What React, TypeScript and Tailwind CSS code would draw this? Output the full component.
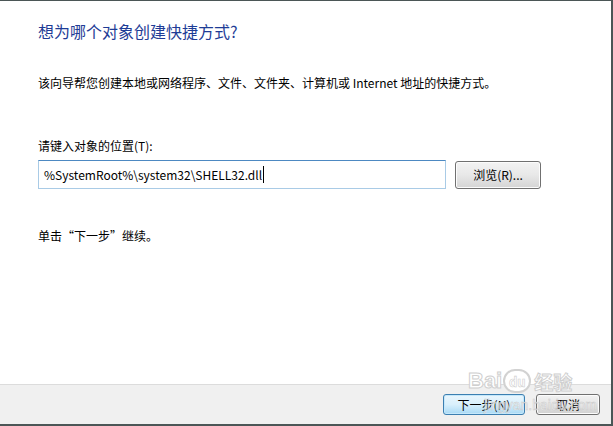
export default function App() {
  return (
    <div className="relative flex h-[426px] w-[613px] flex-col border-t border-r-2 border-b-2 border-[#4b5656] bg-white font-['Noto_Sans_CJK_SC',sans-serif] text-[12px] text-black">
      {/* Content */}
      <div className="flex-1 pl-[38px] pt-[20px]">
        <h1 className="text-[16px] leading-[20px] text-[#1e3c96]">想为哪个对象创建快捷方式?</h1>
        <p className="mt-[34px] leading-[16px]">
          该向导帮您创建本地或网络程序、文件、文件夹、计算机或 Internet 地址的快捷方式。
        </p>
        <div className="mt-[47px] leading-[16px]">请键入对象的位置(T):</div>
        <div className="mt-[6px] flex items-start">
          <div className="flex h-[29px] w-[408px] items-center border border-[#a9cbe6] border-t-[#4d89c2] pl-[5px] text-[12px] leading-none">
            <span>%SystemRoot%\system32\SHELL32.dll</span>
            <span className="ml-px h-[17px] w-px bg-black" />
          </div>
          <button className="ml-[9px] mt-px h-[28px] w-[86px] rounded-[3px] border border-[#707070] bg-gradient-to-b from-[#f3f3f3] via-[#e8e8e8] to-[#d4d4d4] text-[12px] leading-none shadow-[inset_0_0_0_1px_#fcfcfc]">
            浏览(R)...
          </button>
        </div>
        <p className="mt-[39px] leading-[16px]">单击“下一步”继续。</p>
      </div>

      {/* Footer */}
      <div className="flex h-[40px] items-start justify-end gap-[11px] border-t border-[#dcdcdc] bg-[#f0f0f0] pr-[11px] pt-[9px]">
        <button className="h-[21px] w-[82px] rounded-[3px] border border-[#3c7fb1] bg-gradient-to-b from-[#eaf6fd] via-[#d9f0fc] to-[#a7d9f5] text-[12px] leading-none shadow-[inset_0_0_0_1px_#c5e8fb]">
          下一步(N)
        </button>
        <button className="h-[21px] w-[64px] rounded-[3px] border border-[#707070] bg-gradient-to-b from-[#f2f2f2] via-[#e6e6e6] to-[#d0d0d0] text-[12px] leading-none shadow-[inset_0_0_0_1px_#fcfcfc]">
          取消
        </button>
      </div>

      {/* Watermark */}
      <div className="pointer-events-none absolute left-[468px] top-[368px] flex items-center text-[22px] font-bold leading-none text-white [-webkit-text-stroke:1px_#cfcfcf]">
        <span className="font-['Liberation_Sans',sans-serif]">Bai</span>
        <span className="mx-px flex h-[24px] w-[28px] items-center justify-center rounded-full border-2 border-[#d2d2d2] bg-white text-[13px] [-webkit-text-stroke:0.6px_#cfcfcf]">
          du
        </span>
        <span className="ml-[2px] text-[19px]">经验</span>
      </div>
      <div className="pointer-events-none absolute left-[484px] top-[397px] font-['Liberation_Sans',sans-serif] text-[14px] leading-none text-white/60 [-webkit-text-stroke:0.5px_#c8c8c8]">
        jingyan.baidu.com
      </div>
    </div>
  )
}
